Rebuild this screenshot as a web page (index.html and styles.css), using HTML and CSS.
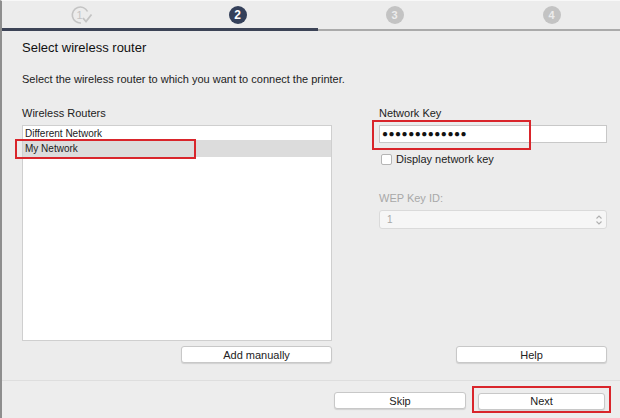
FILE: index.html
```html
<!DOCTYPE html>
<html>
<head>
<meta charset="utf-8">
<link rel="stylesheet" href="styles.css">
</head>
<body>
<div class="window">
  <div class="steps">
    <div class="step">
      <svg width="24" height="22" viewBox="0 0 24 22">
        <path d="M17.5 7.5 A8 8 0 1 0 11 19" fill="none" stroke="#c4c4c4" stroke-width="1.6"/>
        <text x="6.5" y="15" font-family="Liberation Sans, sans-serif" font-size="11" fill="#c4c4c4">1</text>
        <path d="M13 14 L16 17.5 L21.5 10.5" fill="none" stroke="#c4c4c4" stroke-width="1.8"/>
      </svg>
    </div>
    <div class="step"><span class="num current">2</span></div>
    <div class="step"><span class="num">3</span></div>
    <div class="step"><span class="num">4</span></div>
  </div>
  <div class="progress"><div class="done"></div><div class="todo"></div></div>

  <div class="content">
    <h1 class="title">Select wireless router</h1>
    <p class="intro">Select the wireless router to which you want to connect the printer.</p>

    <div class="columns">
      <div class="left">
        <div class="label">Wireless Routers</div>
        <div class="list">
          <div class="row">Different Network</div>
          <div class="row selected">My Network<span class="hl hl-row"></span></div>
        </div>
        <div class="btnrow"><button class="btn add">Add manually</button></div>
      </div>
      <div class="right">
        <div class="label">Network Key</div>
        <div class="keybox">
          <div class="input">●●●●●●●●●●●●●</div>
          <span class="hl hl-key"></span>
        </div>
        <label class="check"><span class="box"></span>Display network key</label>
        <div class="label dim wep">WEP Key ID:</div>
        <div class="select">
          <span>1</span>
          <svg width="8" height="12" viewBox="0 0 8 12"><path d="M1.5 4.5 L4 2 L6.5 4.5 M1.5 7.5 L4 10 L6.5 7.5" fill="none" stroke="#b0b0b0" stroke-width="1.1"/></svg>
        </div>
        <div class="spacer"></div>
        <div class="btnrow"><button class="btn help">Help</button></div>
      </div>
    </div>
  </div>

  <div class="footer">
    <button class="btn skip">Skip</button>
    <div class="nextwrap">
      <button class="btn next">Next</button>
      <span class="hl hl-next"></span>
    </div>
  </div>
</div>
</body>
</html>
```
FILE: styles.css
```css
* { box-sizing: border-box; }
html, body { margin: 0; padding: 0; }
body {
  width: 620px;
  height: 418px;
  overflow: hidden;
  background: #ececec;
  font-family: "Liberation Sans", Arial, sans-serif;
  color: #1a1a1a;
}
.window {
  height: 418px;
  border-left: 2px solid #8e8e8e;
  border-top: 1px solid #f8f8f8;
  display: flex;
  flex-direction: column;
}
.steps {
  height: 27px;
  display: grid;
  grid-template-columns: repeat(4, 157px);
  background: #ececec;
}
.step {
  display: flex;
  align-items: center;
  justify-content: center;
  padding-top: 1px;
}
.step svg { margin-left: 2px; }
.num {
  width: 18px;
  height: 18px;
  border-radius: 50%;
  background: #c3c3c3;
  color: #ececec;
  font-size: 11px;
  font-weight: bold;
  display: flex;
  align-items: center;
  justify-content: center;
}
.num.current {
  background: #34405a;
  color: #fff;
  font-size: 12px;
}
.progress {
  height: 3px;
  display: flex;
  align-items: flex-start;
}
.progress .done { width: 316px; height: 3px; background: #3c4356; }
.progress .todo { flex: 1; height: 2px; background: #aaaaaa; margin-top: 1px; }

.content {
  flex: 1;
  padding: 0 13px 0 20px;
  display: flex;
  flex-direction: column;
}
.title {
  margin: 9px 0 0;
  font-size: 13px;
  font-weight: normal;
  line-height: 16px;
  color: #111;
}
.intro {
  margin: 16px 0 0;
  font-size: 11px;
  line-height: 14px;
  color: #222;
}
.columns {
  flex: 1;
  display: flex;
  margin-top: 20px;
  padding-bottom: 17px;
  gap: 47px;
}
.label {
  font-size: 11px;
  line-height: 14px;
  color: #222;
}
.left {
  width: 310px;
  display: flex;
  flex-direction: column;
}
.list {
  margin-top: 5px;
  flex: 1;
  background: #fff;
  border: 1px solid #cfcfcf;
  padding-top: 1px;
}
.row {
  position: relative;
  font-size: 10px;
  line-height: 13px;
  padding-left: 2px;
  color: #222;
}
.row.selected {
  background: #dcdcdc;
  height: 17px;
  line-height: 17px;
}
.hl {
  position: absolute;
  border: 2px solid #d9252b;
  pointer-events: none;
}
.hl-row { left: -8px; top: -1px; width: 181px; height: 20px; }

.btnrow { display: flex; justify-content: flex-end; margin-top: 5px; }
.btn {
  font-family: "Liberation Sans", Arial, sans-serif;
  font-size: 11px;
  color: #222;
  background: #fff;
  border: 1px solid #c8c8c8;
  border-radius: 3px;
  box-shadow: 0 1px 1px rgba(0,0,0,0.12);
  height: 17px;
  padding: 0;
}
.add { width: 151px; }
.help { width: 151px; }

.right {
  width: 228px;
  display: flex;
  flex-direction: column;
}
.keybox { position: relative; margin-top: 5px; }
.input {
  height: 18px;
  background: #fff;
  border: 1px solid #c8c8c8;
  font-size: 10px;
  letter-spacing: 0.5px;
  line-height: 16px;
  padding-left: 2px;
  color: #111;
}
.hl-key { left: -7px; top: -5px; width: 159px; height: 30px; }
.check {
  display: flex;
  align-items: center;
  margin-top: 10px;
  font-size: 11px;
  color: #222;
  line-height: 12px;
}
.box {
  width: 11px;
  height: 11px;
  background: #fff;
  border: 1px solid #b5b5b5;
  border-radius: 2px;
  margin: 0 4px 0 2px;
}
.dim { color: #a8a8a8; }
.wep { margin-top: 26px; }
.select {
  margin-top: 5px;
  height: 19px;
  background: #f6f6f6;
  border: 1px solid #dadada;
  border-radius: 3px;
  display: flex;
  align-items: center;
  justify-content: space-between;
  padding: 0 3px 0 7px;
  font-size: 10px;
  color: #a8a8a8;
}
.spacer { flex: 1; }

.footer {
  height: 38px;
  border-top: 1px solid #dedede;
  display: flex;
  justify-content: flex-end;
  align-items: center;
  gap: 12px;
  padding: 2px 15px 0 0;
  background: #ededed;
}
.skip { width: 132px; }
.nextwrap { position: relative; }
.next { width: 127px; }
.hl-next { left: -6px; top: -5px; width: 139px; height: 27px; }
```
